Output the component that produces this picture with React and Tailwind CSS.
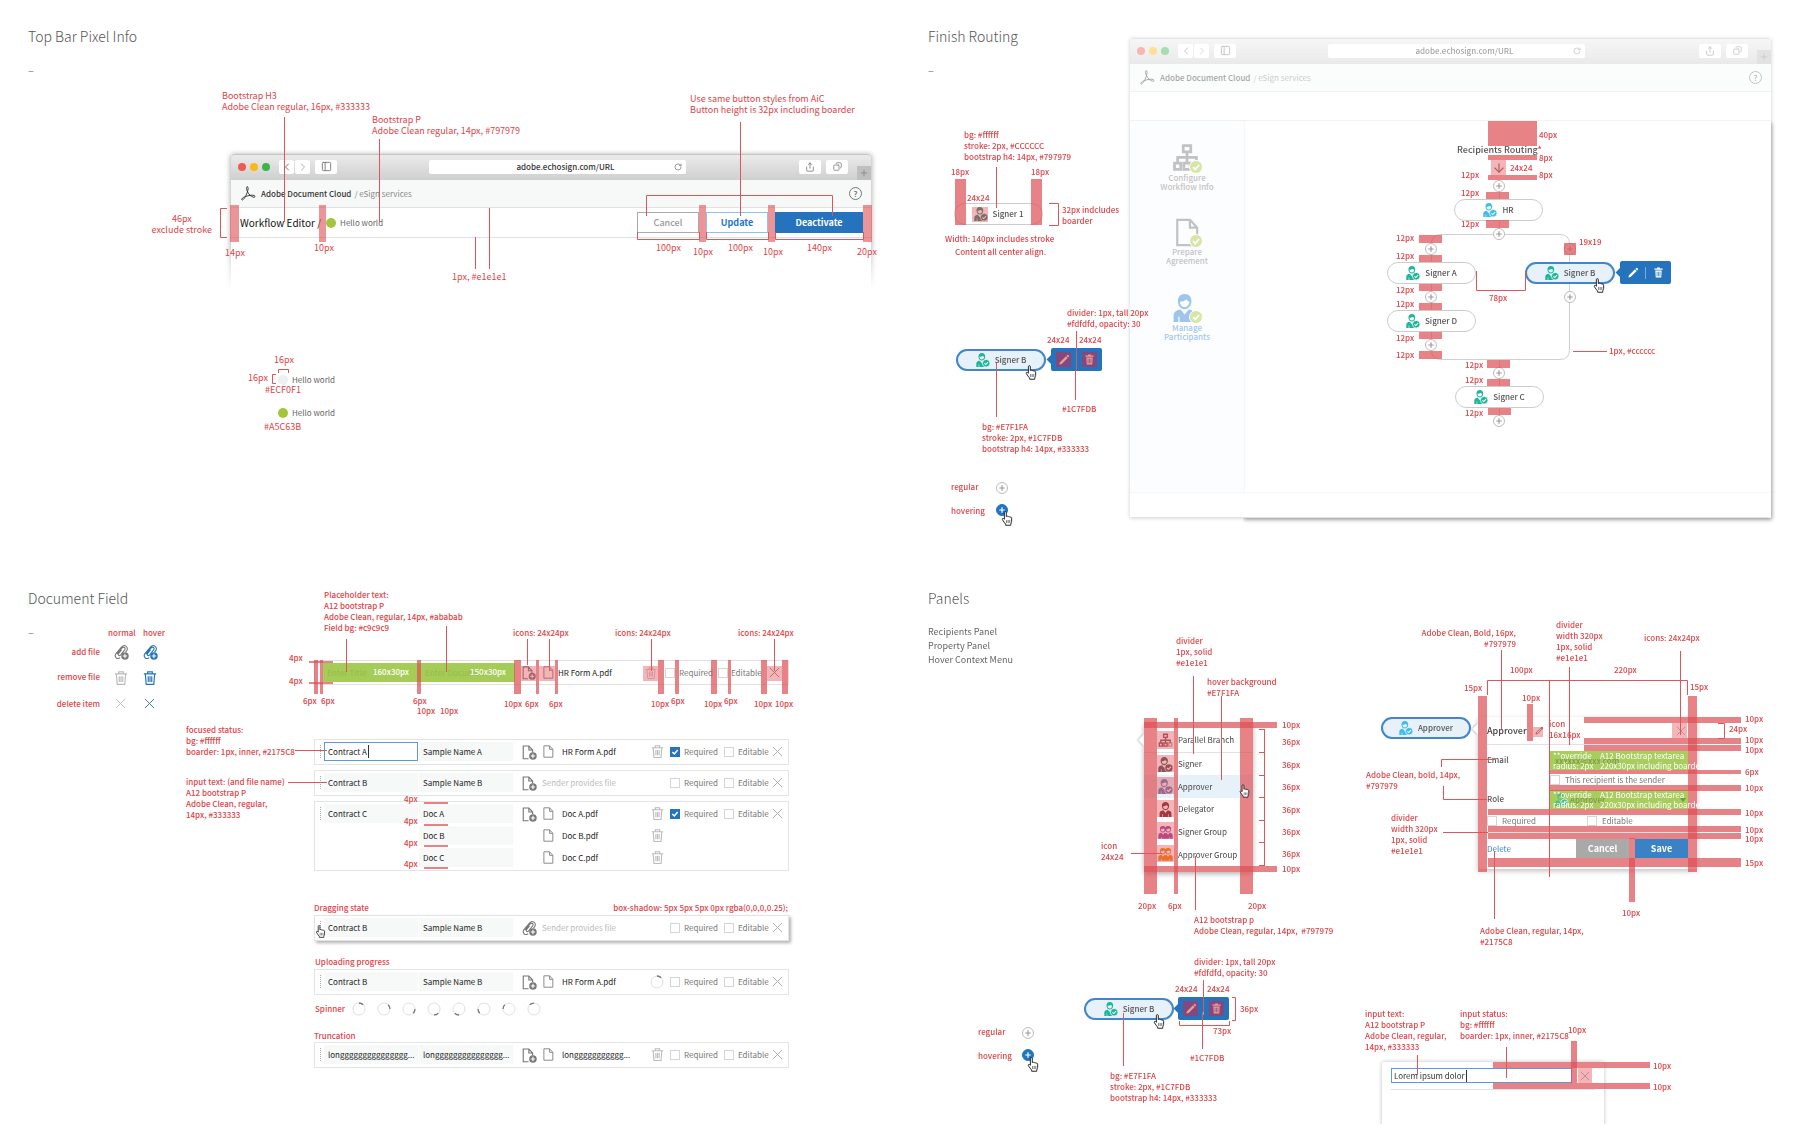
import React from "react";
import { ChevronLeft, ChevronRight, RotateCw, Plus, Share, Copy, PanelLeft, ArrowDown } from "lucide-react";

/* ---------- icons ---------- */

function Person({ className, badge = true }) {
  return (
    <svg viewBox="0 0 24 24" className={className} fill="currentColor" aria-hidden="true">
      <path d="M10 0C6 0 4.2 2.800 4.200 6c0 4 2.400 7 5.800 7s5.800-3 5.800-7C15.800 2.800 14 0 10 0Zm0 11.200c-2.300 0-4-2-4-4.600 2.600 0 4.300-.8 5.400-2 .6 1.100 1.500 1.700 2.600 2-.1 2.700-1.700 4.600-4 4.600Z" />
      <path d="M6.500 13.200 10 17.500l3.500-4.300c1.600.3 2.600.7 3.400 1.400V24H5.600v-4.500h-1V24H.5v-5.600c0-3 2.200-4.600 6-5.200Z" />
      {badge && (
        <>
          <circle cx="17.500" cy="17.500" r="6.500" stroke="#fff" strokeWidth="1.200" />
          <path d="m14.400 17.600 2.300 2.300 4-4.300" fill="none" stroke="#fff" strokeWidth="1.800" />
        </>
      )}
    </svg>
  );
}

function PersonPlain({ className }) {
  return (
    <svg viewBox="-2 0 24 24" className={className} fill="currentColor" aria-hidden="true">
      <path d="M10 0C6 0 4.2 2.800 4.200 6c0 4 2.400 7 5.800 7s5.800-3 5.800-7C15.800 2.800 14 0 10 0Zm0 11.200c-2.300 0-4-2-4-4.600 2.600 0 4.300-.8 5.400-2 .6 1.100 1.500 1.700 2.600 2-.1 2.700-1.700 4.600-4 4.600Z" />
      <path d="M6.500 13.200 10 17.500l3.500-4.300c3.800.6 6 2.200 6 5.200V24h-4v-4.500h-1V24h-9v-4.500h-1V24H.5v-5.600c0-3 2.200-4.600 6-5.200Z" />
    </svg>
  );
}

function People({ className }) {
  return (
    <svg viewBox="0 0 24 24" className={className} fill="currentColor" aria-hidden="true">
      <path d="M7.500 1.500C4.600 1.500 3 3.500 3 6.300 3 9.500 4.800 12 7.500 12c1.800 0 3.500-1.300 4.500-3 1 1.700 2.700 3 4.500 3C19.200 12 21 9.500 21 6.300c0-2.800-1.600-4.800-4.500-4.800-1.800 0-3.500.8-4.500 2.300-1-1.500-2.700-2.300-4.500-2.300Zm0 9c-1.800 0-3-1.600-3-3.700 2 0 3.400-.6 4.200-1.600.5.900 1.200 1.400 2 1.600 0 2.100-1.400 3.700-3.200 3.700Zm9 0c-1.800 0-3-1.600-3-3.700 2 0 3.400-.6 4.200-1.600.5.900 1.200 1.400 2 1.600 0 2.100-1.400 3.700-3.200 3.700Z" />
      <path d="M5.500 12.500 8 15.500l2.500-3 1.500.6 1.500-.6 2.500 3 2.500-3c3.500.5 5 2 5 4.500v5h-4.500v-3h-.8v3H5.800v-3H5v3H.500v-5c0-2.500 1.500-4 5-4.500Z" />
    </svg>
  );
}

function Pencil({ className }) {
  return (
    <svg viewBox="0 0 24 24" className={className} fill="currentColor" aria-hidden="true">
      <path d="M18.500 2.200a1.500 1.500 0 0 1 2.100 0l1.200 1.200a1.500 1.500 0 0 1 0 2.100L20.300 7 17 3.700ZM16 4.700 19.300 8 7.300 20 3 21.200a.2.200 0 0 1-.2-.2L4 16.700Z" />
    </svg>
  );
}

function PencilLine({ className }) {
  return (
    <svg viewBox="0 0 24 24" className={className} fill="none" stroke="currentColor" strokeWidth="2" aria-hidden="true">
      <path d="M18.500 2.500 21.500 5.500 7.500 19.800 2.500 21.500 4.200 16.500ZM15.500 5.500l3 3" />
    </svg>
  );
}

function Cross({ className }) {
  return (
    <svg viewBox="0 0 12 12" className={className} fill="none" stroke="currentColor" aria-hidden="true">
      <path d="m1 1 10 10M11 1 1 11" />
    </svg>
  );
}

function TrashSolid({ className }) {
  return (
    <svg viewBox="0 0 24 24" className={className} fill="currentColor" aria-hidden="true">
      <path d="M9 1h6v2.500h6V6H3V3.500h6Z" />
      <path fillRule="evenodd" d="M5 7.500h14L18 23H6Zm3 3v9.500h1.500v-9.500Zm3.300 0v9.500h1.500v-9.500Zm3.200 0v9.500H16v-9.500Z" />
    </svg>
  );
}

function TrashLine({ className }) {
  return (
    <svg viewBox="0 0 24 24" className={className} fill="none" stroke="currentColor" strokeWidth="2" aria-hidden="true">
      <path d="M1.500 5h21M8 4.500V1.500h8v3M4 5l1.500 18h13L20 5M9 9v10M12 9v10M15 9v10" />
    </svg>
  );
}

function FileLine({ className, plus = false }) {
  return (
    <svg viewBox="0 0 24 24" className={className} fill="none" stroke="currentColor" strokeWidth="1.800" aria-hidden="true">
      {plus ? (
        <>
          <path d="M10.500 22H2V1.500h9l6 6.500v4M11 1.500V8h6" />
          <circle cx="17.500" cy="17.500" r="6" fill="currentColor" stroke="none" />
          <path d="M17.500 14v7M14 17.500h7" stroke="#fff" />
        </>
      ) : (
        <path d="M3.500 1.500h10.500l6 6.500v14.500h-16.500ZM14 1.500V8h6" />
      )}
    </svg>
  );
}

function ClipPlus({ className }) {
  return (
    <svg viewBox="0 0 24 24" className={className} fill="none" stroke="currentColor" strokeWidth="1.700" aria-hidden="true">
      <path d="M18.500 11.500 20 9.500c2.500-3.200 1.200-6.300-1-7.700-2.300-1.400-5-.8-6.700 1.200L3.500 13.500c-2 2.400-1.800 5.300 0 7 2 1.900 4.800 1.300 6.300-.4M12 8 7.500 13.600c-.8 1.100-.7 2.300.1 3 1 .7 2.100.4 2.900-.6l6.500-8.200c1-1.400.8-2.900-.2-3.800-1.200-.9-2.700-.7-3.800.6L5 14.500" />
      <circle cx="17.500" cy="17.500" r="6" fill="currentColor" stroke="none" />
      <path d="M17.500 14v7M14 17.500h7" stroke="#fff" />
    </svg>
  );
}

function Acrobat({ className }) {
  return (
    <svg viewBox="0 0 24 24" className={className} fill="none" stroke="currentColor" strokeWidth="1.500" aria-hidden="true">
      <path d="M10 1c2.200.2 1.600 5.200-.2 9.800C7.800 16 4.300 22.600 2 22.300c-2.200-.4-.6-3.200 4.500-5.200 5-2 11.300-3 14.400-2 2.600 1 1.600 3.400-1 2.800-3.600-.8-7.900-4.800-9.700-9.200C8.600 5 8.300 1 10 1Z" />
    </svg>
  );
}

function Branch({ className }) {
  return (
    <svg viewBox="0 0 24 24" className={className} fill="none" stroke="currentColor" strokeWidth="2.200" aria-hidden="true">
      <path d="M9 2h6v5H9ZM2 16h5v5H2ZM9.500 16h5v5h-5ZM12 7v9M4.500 16v-4.500h15V16" />
      <path d="M17 16h5v5h-5Z" strokeOpacity=".5" />
    </svg>
  );
}

function Hand({ className }) {
  return (
    <svg viewBox="0 0 16 20" className={className} fill="#fff" stroke="#222" strokeWidth="1.300" strokeLinejoin="round" aria-hidden="true">
      <path d="M4.500 11V2.200a1.300 1.300 0 0 1 2.600 0V7.500c.5-.9 2.200-.8 2.500.3.600-.8 2.100-.5 2.300.6.800-.6 2.300-.2 2.300 1.200v4.200c0 1.200-.9 2.200-1.200 3.700V19H6.200v-1.500c-1.200-1.500-3-3.600-4.400-6-.7-1.300.8-2.300 1.800-1.300Z" />
      <path d="M7.500 12v4M9.600 12v4M11.700 12v4" strokeWidth=".8" />
    </svg>
  );
}

function DoneBadge() {
  return (
    <svg viewBox="0 0 14 14" className="absolute -right-px -bottom-px size-[14px]" aria-hidden="true">
      <circle cx="7" cy="7" r="6.500" fill="#a5c63b" stroke="#fff" />
      <path d="m4 7.200 2.200 2.200 4-4.400" fill="none" stroke="#fff" strokeWidth="1.800" />
    </svg>
  );
}

/* ---------- canvas helpers ---------- */

function Board({ title, children }) {
  return (
    <section className="relative min-h-[562px] overflow-hidden px-7 pt-[26px]">
      <h2 className="text-[14px] leading-5 font-light text-[#555]">{title}</h2>
      {children}
    </section>
  );
}

function Dash() {
  return <p className="mt-[18px] text-[11px] leading-3 text-[#888]">–</p>;
}

function Notes({ items, size = "text-[8px] font-medium" }) {
  return items.map(([place, text], i) => (
    <p key={i} className={`absolute leading-[11px] whitespace-pre text-[#dd4449] ${size} ${place}`}>
      {text}
    </p>
  ));
}

function Redlines({ shift, bars = [], tints = [], lines, opacity = 0.7, children }) {
  return (
    <svg className="pointer-events-none absolute inset-0 h-full w-full" aria-hidden="true">
      <g transform={shift}>
        {children}
        {bars.map(([x, y, w, h], i) => (
          <rect key={i} x={x} y={y} width={w} height={h} fill="#dd4f54" fillOpacity={opacity} />
        ))}
        {tints.map(([x, y, w, h], i) => (
          <rect key={i} x={x} y={y} width={w} height={h} fill="#e0474c" fillOpacity=".4" />
        ))}
        <path d={lines} fill="none" stroke="#e0555a" />
      </g>
    </svg>
  );
}

function Signer({ label, place, tone = "text-[#1fb59a]", active = false }) {
  return (
    <button
      className={`absolute flex h-[22px] items-center justify-center gap-[5px] rounded-full text-[8px] font-medium text-[#555] ${
        active ? "w-[90px] border-2 border-[#3f86cb] bg-[#e7f1fa]" : "w-[89px] border border-[#ccc] bg-white"
      } ${place}`}
    >
      <Person className={`size-[14px] ${tone}`} />
      {label}
    </button>
  );
}

function AddStep({ place, hover = false }) {
  return (
    <button
      aria-label="Add step"
      className={`absolute flex size-[12px] items-center justify-center rounded-full border ${
        hover ? "border-[#2175bd] bg-[#2175bd] text-white" : "border-[#bbb] bg-white text-[#999]"
      } ${place}`}
    >
      <Plus className="size-[8px] shrink-0" strokeWidth={3.500} />
    </button>
  );
}

function NodeTools({ place, muted = false }) {
  const tone = muted ? "bg-[#84497c] text-[#ee9c98]" : "text-white";
  return (
    <div className={`absolute flex h-[23px] w-[51px] items-center rounded-[2px] bg-[#2473bc] ${place}`}>
      <span className="absolute top-[8px] -left-[3px] size-[7px] rotate-45 bg-[#2473bc]" />
      <span className="flex flex-1 justify-center">
        <button aria-label="Edit" className={`flex size-[15px] items-center justify-center ${tone}`}>
          <Pencil className="size-[12px]" />
        </button>
      </span>
      <span className="h-3 w-px bg-white/40" />
      <span className="flex flex-1 justify-center">
        <button aria-label="Delete" className={`flex size-[15px] items-center justify-center ${tone}`}>
          <TrashSolid className="size-[11px]" />
        </button>
      </span>
    </div>
  );
}

function Check({ label, checked = false, className = "" }) {
  return (
    <label className={`flex items-center text-[8px] leading-[11px] whitespace-nowrap text-[#777] ${className}`}>
      <span className="relative flex size-[10px] shrink-0">
        <input
          type="checkbox"
          defaultChecked={checked}
          className="size-[10px] appearance-none border border-[#d5d5d5] bg-white checked:border-[#2473bc] checked:bg-[#2473bc]"
        />
        {checked && (
          <svg viewBox="0 0 10 10" className="absolute inset-0 size-[10px]" aria-hidden="true">
            <path d="m2.300 5 2 2 3.400-4" fill="none" stroke="#fff" strokeWidth="1.500" />
          </svg>
        )}
      </span>
      {label}
    </label>
  );
}

/* ---------- browser chrome ---------- */

function BrowserTop() {
  const key = "flex h-[14px] items-center justify-center rounded-[2px] bg-white text-[#777]";
  return (
    <>
      <div className="flex h-[26px] items-center rounded-t-[4px] border-t border-[#c5c5c5] bg-linear-to-b from-[#ebebeb] to-[#cfcfcf] pb-[2px] pl-[7px]">
        <div className="flex gap-1">
          <span className="size-2 rounded-full bg-[#f05a54]" />
          <span className="size-2 rounded-full bg-[#fbb917]" />
          <span className="size-2 rounded-full bg-[#39b54a]" />
        </div>
        <button aria-label="Back" className={`ml-[9px] w-[15px] ${key}`}>
          <ChevronLeft className="size-[12px]" strokeWidth={2} />
        </button>
        <button aria-label="Forward" className={`ml-px w-[15px] ${key}`}>
          <ChevronRight className="size-[12px] text-[#aaa]" strokeWidth={2} />
        </button>
        <button aria-label="Sidebar" className={`ml-[5px] w-[22px] ${key}`}>
          <PanelLeft className="size-[11px]" strokeWidth={2} />
        </button>
        <div className="relative ml-[92px] flex">
          <input
            aria-label="Address"
            defaultValue="adobe.echosign.com/URL"
            className="h-[14px] w-[257px] rounded-[2px] bg-white pl-[16px] text-center text-[8px] font-medium text-[#333]"
          />
          <RotateCw className="absolute top-[3px] right-[4px] size-[8px] text-[#888]" strokeWidth={2.500} />
        </div>
        <button aria-label="Share" className={`ml-auto w-[22px] ${key}`}>
          <Share className="size-[10px]" strokeWidth={2} />
        </button>
        <button aria-label="Tabs" className={`ml-[5px] w-[22px] ${key}`}>
          <Copy className="size-[9px] -scale-x-100" strokeWidth={2} />
        </button>
        <button aria-label="New tab" className="-mb-[2px] ml-[9px] flex size-[14px] items-center justify-center self-end bg-[#bfbfbf] text-[#888]">
          <Plus className="size-[10px]" strokeWidth={2} />
        </button>
      </div>
      <div className="flex h-[28px] items-center border-b border-[#e1e1e1] bg-[#f7f9f9] pr-[9px] pl-[10px] text-[8px] text-[#888]">
        <Acrobat className="size-[15px] text-[#333]" />
        <span className="ml-[5px] font-medium text-[#333]">Adobe Document Cloud</span>
        <span className="ml-[3px]">/ eSign services</span>
        <button
          aria-label="Help"
          className="ml-auto flex size-[13px] items-center justify-center rounded-full border border-[#777] text-[8px] font-medium text-[#666]"
        >
          ?
        </button>
      </div>
    </>
  );
}

/* ---------- board 1: top bar ---------- */

const topBarNotes = [
  ["left-[222px] top-[90px]", "Bootstrap H3\nAdobe Clean regular, 16px, #333333"],
  ["left-[372px] top-[114px]", "Bootstrap P\nAdobe Clean regular, 14px, #797979"],
  ["left-[690px] top-[93px]", "Use same button styles from AiC\nButton height is 32px including boarder"],
  ["left-[142px] top-[213px] w-[70px] text-right", "46px          \nexclude stroke"],
  ["left-[225px] top-[247px]", "14px"],
  ["left-[314px] top-[242px]", "10px"],
  ["left-[452px] top-[271px]", "1px, #e1e1e1"],
  ["left-[656px] top-[242px]", "100px"],
  ["left-[693px] top-[246px]", "10px"],
  ["left-[728px] top-[242px]", "100px"],
  ["left-[763px] top-[246px]", "10px"],
  ["left-[807px] top-[242px]", "140px"],
  ["left-[857px] top-[246px]", "20px"],
  ["left-[274px] top-[354px]", "16px"],
  ["left-[248px] top-[372px]", "16px"],
  ["left-[265px] top-[384px]", "#ECF0F1"],
  ["left-[264px] top-[421px]", "#A5C63B"],
];

function TopBarBoard() {
  return (
    <Board title="Top Bar Pixel Info">
      <Dash />
      <div className="absolute top-[154px] left-[230px] w-[642px]">
        <div className="h-[136px] rounded-t-[4px] border-x border-[#d5d5d5] shadow-[0_0_5px_rgba(0,0,0,0.3)]">
          <BrowserTop />
          <div className="flex h-[30px] items-center border-b border-[#e1e1e1] bg-white pr-[8px] pl-[9px]">
            <h3 className="text-[10px] leading-4 text-[#111]">Workflow Editor /</h3>
            <p className="ml-[5px] flex items-center gap-[4px] text-[8px] text-[#666]">
              <span className="size-[10px] rounded-full bg-[#a5c63b]" />
              Hello world
            </p>
            <button className="ml-auto h-[21px] w-[62px] border border-[#aaa] bg-white text-[9px] font-medium text-[#999]">
              Cancel
            </button>
            <button className="ml-[7px] h-[21px] w-[62px] border border-[#90c0ee] bg-white text-[9px] font-bold text-[#2175c8]">
              Update
            </button>
            <button className="ml-[7px] h-[21px] w-[88px] bg-[#2473bc] text-[9px] font-bold text-white">Deactivate</button>
          </div>
        </div>
        <div className="absolute -inset-x-2 -bottom-2 h-[56px] bg-linear-to-b from-transparent to-white to-85%" />
      </div>

      <p className="absolute top-[374px] left-[278px] flex items-center gap-[4px] text-[8px] leading-3 text-[#666]">
        <span className="size-[10px] rounded-full bg-[#ecf0f1]" />
        Hello world
      </p>
      <p className="absolute top-[407px] left-[278px] flex items-center gap-[4px] text-[8px] leading-3 text-[#666]">
        <span className="size-[10px] rounded-full bg-[#a5c63b]" />
        Hello world
      </p>

      <Redlines
        opacity={0.6}
        bars={[
          [230, 205, 9, 37],
          [319, 205, 7, 37],
          [699, 205, 7, 37],
          [768, 205, 7, 37],
          [863, 205, 9, 37],
        ]}
        lines="M284.500 117V222M379.500 139V222M227 208.500H220.500V237.500H227M475.500 237V269M489.500 208V269M740.500 122V216M646.500 216V195.500H832.500V216M637.500 232V239.500H699.500V232M706.500 232V239.500H768.500V232M775.500 232V239.500H863.500V232M278.500 373V369.500H288.500V373M276 374.500H272.500V383.500H276"
      />
      <Notes items={topBarNotes} size="text-[9px]" />
    </Board>
  );
}

/* ---------- board 2: routing ---------- */

const routingNotes = [
  ["left-[64px] top-[129px]", "bg: #ffffff\nstroke: 2px, #CCCCCC\nbootstrap h4: 14px, #797979"],
  ["left-[51px] top-[166px]", "18px"],
  ["left-[131px] top-[166px]", "18px"],
  ["left-[67px] top-[192px]", "24x24"],
  ["left-[162px] top-[204px]", "32px indcludes\nboarder"],
  ["left-[45px] top-[233px]", "Width: 140px includes stroke"],
  ["left-[55px] top-[246px]", "Content all center align."],
  ["left-[167px] top-[307px]", "divider: 1px, tall 20px\n#fdfdfd, opacity: 30"],
  ["left-[147px] top-[334px]", "24x24"],
  ["left-[179px] top-[334px]", "24x24"],
  ["left-[162px] top-[403px]", "#1C7FDB"],
  ["left-[82px] top-[421px]", "bg: #E7F1FA\nstroke: 2px, #1C7FDB\nbootstrap h4: 14px, #333333"],
  ["left-[51px] top-[481px]", "regular"],
  ["left-[51px] top-[505px]", "hovering"],
  ["left-[639px] top-[129px]", "40px"],
  ["left-[639px] top-[152px]", "8px"],
  ["left-[610px] top-[162px]", "24x24"],
  ["left-[639px] top-[169px]", "8px"],
  ["left-[561px] top-[169px]", "12px"],
  ["left-[561px] top-[187px]", "12px"],
  ["left-[561px] top-[218px]", "12px"],
  ["left-[496px] top-[232px]", "12px"],
  ["left-[496px] top-[250px]", "12px"],
  ["left-[496px] top-[284px]", "12px"],
  ["left-[496px] top-[298px]", "12px"],
  ["left-[496px] top-[332px]", "12px"],
  ["left-[496px] top-[349px]", "12px"],
  ["left-[679px] top-[236px]", "19x19"],
  ["left-[589px] top-[292px]", "78px"],
  ["left-[709px] top-[345px]", "1px, #cccccc"],
  ["left-[565px] top-[359px]", "12px"],
  ["left-[565px] top-[374px]", "12px"],
  ["left-[565px] top-[407px]", "12px"],
];

function SideStep({ children, label, tone, className = "" }) {
  return (
    <li className={`flex flex-col items-center ${className}`}>
      <span className={`relative flex size-[30px] items-center justify-center ${tone}`}>
        {children}
        <DoneBadge />
      </span>
      <span className={`text-center text-[8px] leading-[9px] font-medium whitespace-pre ${tone}`}>{label}</span>
    </li>
  );
}

function RoutingBoard() {
  return (
    <Board title="Finish Routing">
      <Dash />

      <div className="absolute top-[38px] left-[230px] w-[641px] shadow-[0_1px_4px_rgba(0,0,0,0.2)]">
        <div className="opacity-45">
          <BrowserTop />
          <div className="h-[29px] border-b border-[#e1e1e1] bg-white" />
          <div className="flex h-[372px] border-b border-[#ececec]">
            <ul className="flex w-[114px] shrink-0 flex-col bg-[#f9fafc] pt-[22px]">
              <SideStep tone="text-[#777]" label={"Configure\nWorkflow Info"}>
                <Branch className="size-[30px]" />
              </SideStep>
              <SideStep tone="text-[#777]" label={"Prepare\nAgreement"} className="mt-[26px]">
                <FileLine className="size-[29px]" />
              </SideStep>
              <SideStep tone="text-[#2a80d0]" label={"Manage\nParticipants"} className="mt-[28px]">
                <Person badge={false} className="size-[28px]" />
              </SideStep>
            </ul>
            <div className="flex-1 border-l border-[#eee] bg-white" />
          </div>
          <div className="h-[24px] bg-white" />
        </div>
      </div>
      <div className="absolute top-[121px] left-[343px] h-[397px] w-[528px] shadow-[1px_2px_4px_rgba(0,0,0,0.3)] [clip-path:inset(0_-8px_-10px_0)]" />

      <Redlines shift="translate(-900 0)" lines="">
        <path
          d="M1499.500 180V234M1499.500 360V420M1441 234.500H1560Q1569.500 234.500 1569.500 244V350Q1569.500 359.500 1560 359.500H1441Q1431.500 359.500 1431.500 350V244Q1431.500 234.500 1441 234.500"
          fill="none"
          stroke="#d0d0d0"
        />
      </Redlines>

      <h3 className="absolute top-[144px] left-[557px] text-[9px] leading-3 font-medium whitespace-nowrap text-[#555]">
        Recipients Routing<span className="text-[#dd4449]">*</span>
      </h3>
      <ArrowDown className="absolute top-[161px] left-[592px] size-[14px] text-[#8d6a6c]" strokeWidth={2} />

      <Signer label="Signer 1" place="left-[54px] top-[203px]" tone="text-[#2f8a80]" />
      <Signer label="Signer B" place="left-[56px] top-[349px]" active />
      <NodeTools place="left-[151px] top-[348px]" muted />
      <AddStep place="left-[96px] top-[482px]" />
      <AddStep place="left-[96px] top-[504px]" hover />

      <Signer label="HR" place="left-[554px] top-[199px]" tone="text-[#3ebcee]" />
      <Signer label="Signer A" place="left-[487px] top-[262px]" />
      <Signer label="Signer D" place="left-[487px] top-[310px]" />
      <Signer label="Signer C" place="left-[555px] top-[386px]" />
      <Signer label="Signer B" place="left-[625px] top-[262px]" active />
      <NodeTools place="left-[720px] top-[261px]" />
      <AddStep place="left-[593px] top-[180px]" />
      <AddStep place="left-[593px] top-[228px]" />
      <AddStep place="left-[525px] top-[243px]" />
      <AddStep place="left-[525px] top-[291px]" />
      <AddStep place="left-[525px] top-[339px]" />
      <AddStep place="left-[664px] top-[243px]" />
      <AddStep place="left-[664px] top-[291px]" />
      <AddStep place="left-[593px] top-[367px]" />
      <AddStep place="left-[593px] top-[415px]" />

      <Redlines
        shift="translate(-900 0)"
        bars={[
          [955, 179, 11, 46],
          [1031, 179, 11, 46],
          [1488, 121, 49, 25],
          [1488, 155, 49, 5],
          [1488, 175, 49, 5],
          [1486, 192, 23, 7],
          [1486, 220, 23, 8],
          [1419, 235, 23, 8],
          [1419, 255, 23, 7],
          [1419, 284, 23, 7],
          [1419, 303, 23, 7],
          [1419, 332, 23, 7],
          [1419, 351, 23, 8],
          [1487, 360, 23, 8],
          [1487, 379, 23, 7],
          [1488, 408, 23, 7],
          [1564, 243, 12, 12],
        ]}
        tints={[
          [972, 207, 16, 15],
          [1491, 160, 15, 15],
        ]}
        lines="M996.500 167V208M1049 203.500H1058.500V225.500H1049M1076.500 331V370M1075.500 370V400M996.500 363V417M1476.500 271V290.500H1525.500V271M1573 351.500H1607"
      />
      <Notes items={routingNotes} />
      <Hand className="absolute top-[365px] left-[125px] h-[15px] w-[12px]" />
      <Hand className="absolute top-[511px] left-[101px] h-[15px] w-[12px]" />
      <Hand className="absolute top-[278px] left-[693px] h-[15px] w-[12px]" />
    </Board>
  );
}

/* ---------- board 3: document field ---------- */

const documentNotes = [
  ["left-[108px] top-[65px]", "normal"],
  ["left-[143px] top-[65px]", "hover"],
  ["left-[50px] w-[50px] text-right top-[84px]", "add file"],
  ["left-[50px] w-[50px] text-right top-[109px]", "remove file"],
  ["left-[50px] w-[50px] text-right top-[136px]", "delete item"],
  ["left-[324px] top-[27px]", "Placeholder text:\nA12 bootstrap P\nAdobe Clean, regular, 14px, #ababab\nField bg: #c9c9c9"],
  ["left-[289px] top-[90px]", "4px"],
  ["left-[289px] top-[113px]", "4px"],
  ["left-[303px] top-[133px]", "6px"],
  ["left-[321px] top-[133px]", "6px"],
  ["left-[413px] top-[133px]", "6px"],
  ["left-[417px] top-[143px]", "10px"],
  ["left-[440px] top-[143px]", "10px"],
  ["left-[513px] top-[65px]", "icons: 24x24px"],
  ["left-[615px] top-[65px]", "icons: 24x24px"],
  ["left-[738px] top-[65px]", "icons: 24x24px"],
  ["left-[504px] top-[136px]", "10px"],
  ["left-[525px] top-[136px]", "6px"],
  ["left-[549px] top-[136px]", "6px"],
  ["left-[651px] top-[136px]", "10px"],
  ["left-[671px] top-[133px]", "6px"],
  ["left-[704px] top-[136px]", "10px"],
  ["left-[724px] top-[133px]", "6px"],
  ["left-[754px] top-[136px]", "10px"],
  ["left-[775px] top-[136px]", "10px"],
  ["left-[186px] top-[162px]", "focused status:\nbg: #ffffff\nboarder: 1px, inner, #2175C8"],
  ["left-[186px] top-[214px]", "input text: (and file name)\nA12 bootstrap P\nAdobe Clean, regular,\n14px, #333333"],
  ["left-[404px] top-[231px]", "4px"],
  ["left-[404px] top-[253px]", "4px"],
  ["left-[404px] top-[275px]", "4px"],
  ["left-[404px] top-[296px]", "4px"],
  ["left-[314px] top-[340px]", "Dragging state"],
  ["left-[588px] w-[200px] text-right top-[340px]", "box-shadow: 5px 5px 5px 0px rgba(0,0,0,0.25);"],
  ["left-[315px] top-[394px]", "Uploading progress"],
  ["left-[315px] top-[441px]", "Spinner"],
  ["left-[314px] top-[468px]", "Truncation"],
];

function Field({ value, label, focused = false }) {
  return (
    <input
      aria-label={label}
      defaultValue={value}
      className={`h-[19px] w-[94px] shrink-0 pb-px pl-[3px] text-[8px] text-[#222] ${
        focused ? "border border-[#5c9bd8] bg-white" : "border border-transparent bg-[#f7f9f9]"
      }`}
    />
  );
}

const spinTurns = ["rotate-0", "rotate-45", "rotate-90", "rotate-135", "rotate-180", "rotate-225", "rotate-270", "rotate-315"];

function Spinner({ turn = 0 }) {
  return (
    <svg viewBox="0 0 14 14" className={`size-[14px] shrink-0 ${spinTurns[turn]}`} fill="none" aria-hidden="true">
      <circle cx="7" cy="7" r="6" stroke="#e0e0e0" />
      <path d="M7 1A6 6 0 0 1 11.200 2.800" stroke="#777" strokeWidth="1.300" />
    </svg>
  );
}

function DocRow({ title, docs, clip = false, required = false, action = "trash", focused = false, className = "" }) {
  return (
    <div className={`absolute left-[314px] flex w-[475px] items-start border border-[#e4e4e4] bg-white pt-[2px] pb-[3px] ${className}`}>
      <span className="mt-[3px] ml-[5px] h-[13px] w-[4px] shrink-0 border-l border-dotted border-[#aaa]" />
      <Field value={title} label="Title" focused={focused} />
      <div className="ml-[1px] flex flex-col gap-[3px]">
        {docs.map((d) => (
          <Field key={d.name} value={d.name} label="Document name" />
        ))}
      </div>
      <button aria-label="Add file" className="mt-[3px] ml-[9px] text-[#777]">
        {clip ? <ClipPlus className="size-[15px]" /> : <FileLine plus className="size-[15px]" />}
      </button>
      <div className="ml-[5px] flex flex-1 flex-col gap-[3px]">
        {docs.map((d) => (
          <div key={d.name} className="flex h-[19px] items-center text-[8px]">
            {d.file ? (
              <>
                <FileLine className="size-[13px] shrink-0 text-[#888]" />
                <span className="ml-[7px] text-[#222]">{d.file}</span>
                {action === "spin" ? (
                  <span className="mr-[6px] ml-auto">
                    <Spinner />
                  </span>
                ) : (
                  <button aria-label="Remove file" className="mr-[6px] ml-auto text-[#bbb]">
                    <TrashLine className="size-[13px]" />
                  </button>
                )}
              </>
            ) : (
              <span className="text-[#bbb]">Sender provides file</span>
            )}
          </div>
        ))}
      </div>
      <div className="flex h-[19px] items-center">
        <Check label="Required" checked={required} className="w-[54px] gap-[4px]" />
        <Check label="Editable" className="w-[48px] gap-[4px]" />
        <button aria-label="Delete item" className="mr-[5px] text-[#aaa]">
          <Cross className="size-[11px]" />
        </button>
      </div>
    </div>
  );
}

function DocumentBoard() {
  return (
    <Board title="Document Field">
      <Dash />

      <div className="absolute top-[83px] left-[114px] grid grid-cols-[29px_15px] items-center gap-y-[11px] text-[#777]">
        <ClipPlus className="size-[15px]" />
        <ClipPlus className="size-[15px] text-[#2473bc]" />
        <TrashLine className="size-[14px] text-[#bbb]" />
        <TrashLine className="size-[14px] text-[#2473bc]" />
        <Cross className="mt-[2px] ml-px size-[11px] text-[#bbb]" />
        <Cross className="mt-[2px] ml-px size-[11px] text-[#2473bc]" />
      </div>

      <div className="absolute top-[98px] left-[314px] flex h-[25px] w-[475px] items-center border border-[#e1e1e1] bg-white text-[8px]">
        <input
          aria-label="Title"
          placeholder="Enter Title"
          className="ml-[8px] h-[19px] w-[96px] bg-[#a5cc57] pl-[4px] font-medium placeholder:text-[#98be4e]"
        />
        <input
          aria-label="Document name"
          placeholder="Enter Document"
          className="h-[19px] w-[96px] bg-[#a5cc57] pl-[6px] font-medium placeholder:text-[#98be4e]"
        />
        <FileLine plus className="ml-[7px] size-[14px] text-[#777]" />
        <FileLine className="ml-[6px] size-[13px] text-[#888]" />
        <span className="ml-[3px] text-[#222]">HR Form A.pdf</span>
        <TrashLine className="ml-auto size-[12px] text-[#ccc]" />
        <Check label="Required" className="ml-[8px] w-[53px] gap-[4px]" />
        <Check label="Editable" className="w-[51px] gap-[3px]" />
        <Cross className="mr-[8px] size-[11px] text-[#888]" />
      </div>
      <p className="absolute top-[104px] left-[373px] text-[8px] leading-3 font-medium text-white">160x30px</p>
      <p className="absolute top-[104px] left-[470px] text-[8px] leading-3 font-medium text-white">150x30px</p>

      <DocRow title="Contract A" focused required docs={[{ name: "Sample Name A", file: "HR Form A.pdf" }]} className="top-[177px]" />
      <DocRow title="Contract B" docs={[{ name: "Sample Name B" }]} className="top-[208px]" />
      <DocRow
        title="Contract C"
        required
        docs={[
          { name: "Doc A", file: "Doc A.pdf" },
          { name: "Doc B", file: "Doc B.pdf" },
          { name: "Doc C", file: "Doc C.pdf" },
        ]}
        className="top-[239px]"
      />
      <DocRow
        title="Contract B"
        clip
        docs={[{ name: "Sample Name B" }]}
        className="top-[353px] shadow-[2px_2px_3px_rgba(0,0,0,0.3)]"
      />
      <DocRow title="Contract B" action="spin" docs={[{ name: "Sample Name B", file: "HR Form A.pdf" }]} className="top-[407px]" />
      <div className="absolute top-[440px] left-[352px] flex gap-[11px]">
        {spinTurns.map((t, i) => (
          <Spinner key={t} turn={i} />
        ))}
      </div>
      <DocRow
        title="longgggggggggggggg..."
        docs={[{ name: "longgggggggggggggg...", file: "longgggggggggg..." }]}
        className="top-[480px]"
      />
      <span className="absolute top-[183px] left-[368px] h-[13px] w-px bg-[#333]" />
      <Hand className="absolute top-[363px] left-[315px] h-[13px] w-[11px]" />

      <Redlines
        shift="translate(0 -562)"
        bars={[
          [309, 661, 24, 2],
          [309, 682, 24, 2],
          [314, 660, 4, 34],
          [320, 660, 3, 34],
          [417, 660, 4, 34],
          [514, 660, 7, 34],
          [536, 660, 3, 34],
          [555, 660, 3, 34],
          [658, 660, 6, 34],
          [675, 660, 4, 34],
          [711, 660, 6, 34],
          [728, 660, 3, 34],
          [761, 660, 6, 34],
          [782, 660, 6, 34],
          [424, 802, 24, 2],
          [424, 824, 24, 2],
          [424, 845, 24, 2],
          [424, 867, 24, 2],
        ]}
        tints={[
          [521, 666, 15, 15],
          [539, 666, 16, 15],
          [643, 666, 15, 15],
          [767, 666, 15, 15],
        ]}
        lines="M346.500 639V672M446.500 626V672M527.500 639V665M549.500 639V671M651.500 639V671M774.500 639V671M295 750.500H327M288 782.500H327"
      />
      <Notes items={documentNotes} />
    </Board>
  );
}

/* ---------- board 4: panels ---------- */

const panelNotes = [
  ["left-[276px] top-[73px]", "divider\n1px, solid\n#e1e1e1"],
  ["left-[307px] top-[114px]", "hover background\n#E7F1FA"],
  ["left-[382px] top-[157px]", "10px"],
  ["left-[382px] top-[174px]", "36px"],
  ["left-[382px] top-[197px]", "36px"],
  ["left-[382px] top-[219px]", "36px"],
  ["left-[382px] top-[242px]", "36px"],
  ["left-[382px] top-[264px]", "36px"],
  ["left-[382px] top-[286px]", "36px"],
  ["left-[382px] top-[301px]", "10px"],
  ["left-[201px] top-[278px]", "icon\n24x24"],
  ["left-[238px] top-[338px]", "20px"],
  ["left-[268px] top-[338px]", "6px"],
  ["left-[348px] top-[338px]", "20px"],
  ["left-[294px] top-[352px]", "A12 bootstrap p\nAdobe Clean, regular, 14px,  #797979"],
  ["left-[516px] w-[100px] text-right top-[65px]", "Adobe Clean, Bold, 16px,\n#797979"],
  ["left-[656px] top-[57px]", "divider\nwidth 320px\n1px, solid\n#e1e1e1"],
  ["left-[744px] top-[70px]", "icons: 24x24px"],
  ["left-[610px] top-[102px]", "100px"],
  ["left-[714px] top-[102px]", "220px"],
  ["left-[564px] top-[120px]", "15px"],
  ["left-[790px] top-[119px]", "15px"],
  ["left-[622px] top-[130px]", "10px"],
  ["left-[649px] top-[156px]", "icon\n16x16px"],
  ["left-[845px] top-[151px]", "10px"],
  ["left-[829px] top-[161px]", "24px"],
  ["left-[845px] top-[172px]", "10px"],
  ["left-[845px] top-[182px]", "10px"],
  ["left-[845px] top-[204px]", "6px"],
  ["left-[845px] top-[220px]", "10px"],
  ["left-[845px] top-[245px]", "10px"],
  ["left-[845px] top-[262px]", "10px"],
  ["left-[845px] top-[271px]", "10px"],
  ["left-[845px] top-[295px]", "15px"],
  ["left-[466px] top-[207px]", "Adobe Clean, bold, 14px,\n#797979"],
  ["left-[491px] top-[250px]", "divider\nwidth 320px\n1px, solid\n#e1e1e1"],
  ["left-[722px] top-[345px]", "10px"],
  ["left-[580px] top-[363px]", "Adobe Clean, regular, 14px,\n#2175C8"],
  ["left-[294px] top-[394px]", "divider: 1px, tall 20px\n#fdfdfd, opacity: 30"],
  ["left-[275px] top-[421px]", "24x24"],
  ["left-[307px] top-[421px]", "24x24"],
  ["left-[340px] top-[441px]", "36px"],
  ["left-[313px] top-[463px]", "73px"],
  ["left-[290px] top-[490px]", "#1C7FDB"],
  ["left-[210px] top-[508px]", "bg: #E7F1FA\nstroke: 2px, #1C7FDB\nbootstrap h4: 14px, #333333"],
  ["left-[78px] top-[464px]", "regular"],
  ["left-[78px] top-[488px]", "hovering"],
  ["left-[465px] top-[446px]", "input text:\nA12 bootstrap P\nAdobe Clean, regular,\n14px, #333333"],
  ["left-[560px] top-[446px]", "input status:\nbg: #ffffff\nboarder: 1px, inner, #2175C8"],
  ["left-[668px] top-[462px]", "10px"],
  ["left-[753px] top-[498px]", "10px"],
  ["left-[753px] top-[519px]", "10px"],
];

const roles = [
  { name: "Parallel Branch", icon: Branch, tone: "text-[#8a5a5e]" },
  { name: "Signer", icon: Person, tone: "text-[#555a60]" },
  { name: "Approver", icon: Person, tone: "text-[#6a80b8]" },
  { name: "Delegator", icon: PersonPlain, tone: "text-[#7a2f3c]" },
  { name: "Signer Group", icon: People, tone: "text-[#a04aa8]" },
  { name: "Approver Group", icon: People, tone: "text-[#f08c1e]" },
];

function GreenNote({ place }) {
  return (
    <p
      className={`absolute grid h-[20px] w-[150px] grid-cols-[47px_1fr] pl-[3px] text-[8px] leading-[10px] whitespace-nowrap text-white ${place}`}
    >
      <span>**override</span>
      <span>A12 Bootstrap textarea</span>
      <span>radius: 2px</span>
      <span>220x30px including boarde</span>
    </p>
  );
}

function PanelsBoard() {
  return (
    <Board title="Panels">
      <ul className="mt-[17px] text-[9px] leading-[14px] text-[#666]">
        <li>Recipients Panel</li>
        <li>Property Panel</li>
        <li>Hover Context Menu</li>
      </ul>

      {/* role menu */}
      <div className="absolute top-[161px] left-[244px] w-[109px] bg-white py-[6px] shadow-[0_2px_5px_rgba(0,0,0,0.3)]">
        <span className="absolute top-[13px] -left-[4px] size-[8px] rotate-45 bg-white shadow-[-1px_1px_2px_rgba(0,0,0,0.2)]" />
        <ul className="flex h-[137px] flex-col">
          {roles.map(({ name, icon: Icon, tone }, i) => (
            <li key={name} className={`flex flex-1 ${i === 0 ? "border-b border-[#e1e1e1]" : ""} ${i === 2 ? "bg-[#e7f1fa]" : ""}`}>
              <button className="flex w-full items-center pl-[14px] text-[8px] whitespace-nowrap text-[#444]">
                <Icon className={`size-[15px] shrink-0 ${tone}`} />
                <span className="ml-[5px]">{name}</span>
              </button>
            </li>
          ))}
        </ul>
      </div>

      {/* property panel */}
      <Signer label="Approver" place="left-[481px] top-[155px]" tone="text-[#3ebcee]" active />
      <form className="absolute top-[155px] left-[578px] w-[219px] bg-white px-[9px] text-[8px] text-[#555] shadow-[0_2px_5px_rgba(0,0,0,0.25)]">
        <span className="absolute top-[8px] -left-[4px] size-[8px] rotate-45 bg-white shadow-[-1px_1px_2px_rgba(0,0,0,0.2)]" />
        <div className="flex h-[28px] items-center border-b border-[#e1e1e1]">
          <h3 className="text-[9px] font-medium text-[#444]">Approver</h3>
          <button type="button" aria-label="Rename" className="ml-[8px] text-[#555]">
            <PencilLine className="size-[9px]" />
          </button>
          <button type="button" aria-label="Close" className="mr-[2px] ml-auto text-[#aaa]">
            <Cross className="size-[10px]" />
          </button>
        </div>
        <div className="mt-[6px] grid grid-cols-[63px_1fr]">
          <label htmlFor="email" className="pt-[3px] font-medium">
            Email
          </label>
          <input id="email" defaultValue="xxxxxx@xxx.com" className="h-[19px] w-full bg-[#a8cc5e] pl-[5px] text-[8px] font-medium text-[#7d9c48]" />
        </div>
        <Check label="This recipient is the sender" className="mt-[4px] ml-[63px] gap-[5px]" />
        <div className="mt-[5px] grid grid-cols-[63px_1fr]">
          <label htmlFor="role" className="pt-[3px] font-medium">
            Role
          </label>
          <div className="relative flex bg-[#a8cc5e]">
            <Person className="absolute top-[3px] left-[5px] size-[13px] text-[#4dbf8c]" />
            <select id="role" className="h-[19px] w-full appearance-none pl-[20px] text-[8px] font-medium text-[#7d9c48]">
              <option>Approver</option>
            </select>
            <span className="absolute top-[8px] right-[2px] border-x-[3px] border-t-[4px] border-x-transparent border-t-[#6f9a40]" />
          </div>
        </div>
        <div className="mt-[6px] flex">
          <Check label="Required" className="w-[100px] gap-[5px]" />
          <Check label="Editable" className="gap-[5px]" />
        </div>
        <div className="mt-[6px] flex items-center border-t border-[#e1e1e1] pt-[6px] pb-[11px]">
          <a href="#delete" className="text-[#3c86d0]">
            Delete
          </a>
          <button type="button" className="ml-auto h-[19px] w-[53px] bg-[#a9a9a9] text-[9px] font-bold text-white">
            Cancel
          </button>
          <button type="button" className="ml-[6px] h-[19px] w-[53px] bg-[#3a82c6] text-[9px] font-bold text-white">
            Save
          </button>
        </div>
      </form>

      {/* context menu */}
      <Signer label="Signer B" place="left-[184px] top-[436px]" active />
      <NodeTools place="left-[278px] top-[435px]" muted />
      <AddStep place="left-[122px] top-[465px]" />
      <AddStep place="left-[122px] top-[487px]" hover />

      {/* rename field */}
      <div className="absolute top-[500px] left-[482px] h-[80px] w-[222px] rounded-[2px] bg-white px-[9px] pt-[6px] shadow-[0_0_4px_rgba(0,0,0,0.25)]">
        <div className="flex items-center border-b border-[#e1e1e1] pb-[6px]">
          <input aria-label="Name" defaultValue="Lorem ipsum dolor" className="h-[15px] w-[181px] border border-[#5c9bd8] pl-[2px] text-[8px] text-[#333]" />
          <button aria-label="Clear" className="ml-[8px] text-[#aaa]">
            <Cross className="size-[10px]" />
          </button>
        </div>
      </div>
      <span className="absolute top-[508px] left-[566px] h-[12px] w-px bg-[#333]" />

      <Redlines
        shift="translate(-900 -562)"
        bars={[
          [1144, 718, 13, 176],
          [1174, 718, 4, 176],
          [1240, 718, 13, 176],
          [1144, 722, 133, 6],
          [1144, 866, 133, 6],
          [1478, 696, 9, 176],
          [1688, 696, 9, 176],
          [1527, 704, 6, 37],
          [1584, 717, 157, 6],
          [1584, 738, 157, 6],
          [1584, 745, 157, 6],
          [1549, 770, 192, 4],
          [1549, 785, 192, 6],
          [1488, 809, 253, 6],
          [1488, 826, 253, 6],
          [1488, 833, 253, 6],
          [1488, 858, 253, 9],
          [1629, 838, 6, 64],
          [1493, 1062, 157, 6],
          [1493, 1083, 157, 6],
          [1571, 1041, 6, 42],
        ]}
        tints={[
          [1157, 731, 17, 18],
          [1157, 755, 17, 17],
          [1157, 777, 17, 17],
          [1157, 800, 17, 17],
          [1157, 822, 17, 17],
          [1157, 845, 17, 17],
          [1533, 727, 10, 10],
          [1672, 723, 15, 15],
          [1578, 1068, 14, 15],
        ]}
        lines="M1193.500 676V754M1221.500 696V780M1264.500 729V865.500M1259 729.500H1265M1259 752.500H1265M1259 775.500H1265M1259 797.500H1265M1259 820.500H1265M1259 842.500H1265M1259 865.500H1265M1131 853.500H1162M1195.500 856V910M1501.500 650V729M1569.500 667V745M1680.500 651V735M1487.500 695V680.500H1687.500V695M1549.500 680V877M1718 723.500H1724.500V738.500H1718M1496 759.500H1441.500V767M1443.500 786V799.500H1487M1443 832.500H1488M1494.500 851V919M1203.500 980V1012M1202.500 1012V1049M1232 997.500H1235.500V1020.500H1232M1179.500 1021V1025.500H1229.500V1021M1123.500 1013V1066M1417.500 1055V1075M1506.500 1047V1078"
      />
      <GreenNote place="left-[650px] top-[189px]" />
      <GreenNote place="left-[650px] top-[228px]" />
      <Notes items={panelNotes} />
      <Hand className="absolute top-[222px] left-[339px] h-[14px] w-[11px]" />
      <Hand className="absolute top-[452px] left-[253px] h-[15px] w-[12px]" />
      <Hand className="absolute top-[495px] left-[127px] h-[15px] w-[12px]" />
    </Board>
  );
}

export default function App() {
  return (
    <main className='grid min-h-screen grid-cols-2 content-start bg-white font-["Noto_Sans_CJK_SC","Noto_Sans",sans-serif]'>
      <TopBarBoard />
      <RoutingBoard />
      <DocumentBoard />
      <PanelsBoard />
    </main>
  );
}
